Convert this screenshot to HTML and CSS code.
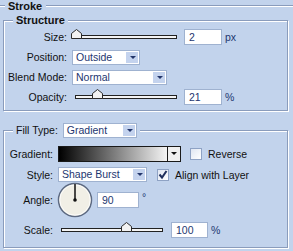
FILE: index.html
```html
<!DOCTYPE html>
<html lang="en">
<head>
    <meta charset="UTF-8">
    <title>Stroke</title>
    <link rel="stylesheet" href="styles.css">
</head>
<body>
    <div class="panel">
        <div class="title"><span>Stroke</span></div>

        <fieldset class="group structure">
            <legend class="legend">Structure</legend>
            <div class="row">
                <span class="label">Size:</span>
                <div class="slider">
                    <svg class="thumb" style="left: 0%" width="11" height="10" viewBox="0 0 11 10"><path d="M0.5 9.5 L0.5 4.5 L5.5 0.5 L10.5 4.5 L10.5 9.5 Z" fill="#f2f2f2" stroke="#2b2b2b"/></svg>
                </div>
                <span class="field">2</span>
                <span class="unit">px</span>
            </div>
            <div class="row">
                <span class="label">Position:</span>
                <div class="select w-position"><span class="value">Outside</span><span class="arrow"></span></div>
            </div>
            <div class="row">
                <span class="label">Blend Mode:</span>
                <div class="select w-blend"><span class="value">Normal</span><span class="arrow"></span></div>
            </div>
            <div class="row">
                <span class="label">Opacity:</span>
                <div class="slider">
                    <svg class="thumb" style="left: 21%" width="11" height="10" viewBox="0 0 11 10"><path d="M0.5 9.5 L0.5 4.5 L5.5 0.5 L10.5 4.5 L10.5 9.5 Z" fill="#f2f2f2" stroke="#2b2b2b"/></svg>
                </div>
                <span class="field">21</span>
                <span class="unit">%</span>
            </div>
        </fieldset>

        <fieldset class="group fill">
            <legend class="legend fill-legend">
                <span>Fill Type:</span>
                <div class="select w-fill"><span class="value">Gradient</span><span class="arrow"></span></div>
            </legend>
            <div class="row row-gradient">
                <span class="label">Gradient:</span>
                <div class="gradient"><span class="ramp"></span><span class="ramp-arrow"></span></div>
                <span class="check"></span>
                <span class="check-text">Reverse</span>
            </div>
            <div class="row row-style">
                <span class="label">Style:</span>
                <div class="select w-style"><span class="value">Shape Burst</span><span class="arrow"></span></div>
                <span class="check checked">
                    <svg width="12" height="12" viewBox="0 0 12 12"><path d="M2.5 5.5 L5 8.5 L9.5 2" fill="none" stroke="#1f2f5c" stroke-width="2"/></svg>
                </span>
                <span class="check-text">Align with Layer</span>
            </div>
            <div class="row row-angle">
                <span class="label">Angle:</span>
                <div class="dial">
                    <svg width="36" height="36" viewBox="0 0 36 36">
                        <circle cx="18" cy="18" r="16.5" fill="#f1efe6" stroke="#5d6a82" stroke-width="1.5"/>
                        <circle cx="18" cy="18" r="15.2" fill="none" stroke="#ffffff" stroke-width="0.8"/>
                        <line x1="18" y1="18" x2="18" y2="2" stroke="#111" stroke-width="1.5"/>
                        <circle cx="18" cy="18" r="1.8" fill="#111"/>
                    </svg>
                </div>
                <span class="field w-angle">90</span>
                <span class="unit degree">&deg;</span>
            </div>
            <div class="row row-scale">
                <span class="label">Scale:</span>
                <div class="slider">
                    <svg class="thumb" style="left: 64%" width="11" height="10" viewBox="0 0 11 10"><path d="M0.5 9.5 L0.5 4.5 L5.5 0.5 L10.5 4.5 L10.5 9.5 Z" fill="#f2f2f2" stroke="#2b2b2b"/></svg>
                </div>
                <span class="field w-scale">100</span>
                <span class="unit">%</span>
            </div>
        </fieldset>
    </div>
</body>
</html>
```

FILE: styles.css
```css
html, body {
    margin: 0;
    padding: 0;
}

body {
    width: 293px;
    height: 251px;
    overflow: hidden;
    background-color: #c2d3ec;
    color: #111;
    font-family: "Liberation Sans", Arial, sans-serif;
    font-size: 10.5px;
}

.panel {
    position: relative;
}

/* top heading with etched line */
.title {
    display: flex;
    align-items: center;
    height: 12px;
    font-size: 11px;
    font-weight: bold;
}

.title::before,
.title::after {
    content: "";
    height: 0;
    border-top: 1px solid #8a9cbc;
    border-bottom: 1px solid #fff;
}

.title::before {
    width: 5px;
    margin-right: 3px;
}

.title::after {
    flex: 1;
    margin-left: 4px;
}

.group {
    margin: 0 5px 0 3px;
    padding: 0;
    min-width: 0;
    border: 1px solid #8a9cbc;
    box-shadow: inset 1px 1px 0 #fff, 1px 1px 0 #fff;
}

.structure {
    margin-top: 2px;
    padding-bottom: 3px;
}

.fill {
    margin-top: 12px;
    padding-bottom: 2px;
}

.legend {
    margin-left: 9px;
    padding: 0 3px;
    height: 13px;
    line-height: 13px;
    font-size: 11px;
    font-weight: bold;
    background-color: #c2d3ec;
}

.fill-legend {
    display: flex;
    align-items: center;
    gap: 5px;
    height: 15px;
    font-size: 10.5px;
    font-weight: normal;
}

.row {
    display: flex;
    align-items: center;
    height: 20px;
}

.structure .label {
    width: 63px;
    margin-right: 5px;
}

.fill .label {
    width: 49px;
    margin-right: 5px;
}

.label {
    text-align: right;
    flex: none;
}

.row-gradient {
    margin-top: 5px;
    height: 21px;
}

.row-style {
    height: 21px;
}

.row-angle,
.row-scale {
    height: 30px;
}

/* slider */
.slider {
    position: relative;
    width: 100px;
    height: 2px;
    margin-left: 3px;
    margin-right: 7px;
    border: 1px solid #222;
    background-color: #f4f4f4;
}

.row-scale .slider {
    margin-right: 8px;
}

.thumb {
    position: absolute;
    bottom: -1px;
    margin-left: -5px;
    display: block;
}

/* text field */
.field {
    box-sizing: border-box;
    width: 38px;
    height: 16px;
    padding: 0 4px;
    line-height: 14px;
    border: 1px solid #9fb2d0;
    background-color: #fff;
    color: #1d3670;
}

.w-angle {
    width: 42px;
}

.w-scale {
    width: 37px;
}

.unit {
    margin-left: 3px;
    color: #1d3670;
}

.degree {
    align-self: flex-start;
    margin-top: 6px;
}

/* dropdown */
.select {
    box-sizing: border-box;
    display: flex;
    height: 15px;
    border: 1px solid #9fb2d0;
    background-color: #fff;
    color: #1d3670;
}

.select .value {
    flex: 1;
    padding-left: 3px;
    line-height: 13px;
    white-space: nowrap;
}

.select .arrow {
    position: relative;
    width: 14px;
    box-sizing: border-box;
    border: 1px solid #fff;
    background-color: #c4d3ee;
}

.select .arrow::after {
    content: "";
    position: absolute;
    left: 4px;
    top: 4px;
    border-left: 3px solid transparent;
    border-right: 3px solid transparent;
    border-top: 3px solid #22356a;
}

.w-position { width: 68px; }
.w-blend { width: 95px; }
.w-fill { width: 74px; }
.w-style { width: 89px; margin-right: 10px; }

/* gradient swatch */
.gradient {
    box-sizing: border-box;
    display: flex;
    width: 123px;
    height: 16px;
    margin-right: 9px;
    border: 1px solid #1a1a1a;
}

.ramp {
    flex: 1;
    background: linear-gradient(to right, #000, #f4f4f4);
}

.ramp-arrow {
    position: relative;
    width: 12px;
    border-left: 1px solid #1a1a1a;
    background-color: #f0f0f0;
}

.ramp-arrow::after {
    content: "";
    position: absolute;
    left: 3px;
    top: 5px;
    border-left: 3px solid transparent;
    border-right: 3px solid transparent;
    border-top: 3px solid #111;
}

/* checkbox */
.check {
    box-sizing: border-box;
    width: 12px;
    height: 12px;
    border: 1px solid #8ea2c4;
    background: linear-gradient(135deg, #dfe6f2, #fff);
}

.check svg {
    display: block;
    margin: -1px;
}

.check-text {
    margin-left: 6px;
}

.dial {
    width: 36px;
    height: 36px;
    margin-left: -1px;
    margin-right: 4px;
}

.dial svg {
    display: block;
}
```
